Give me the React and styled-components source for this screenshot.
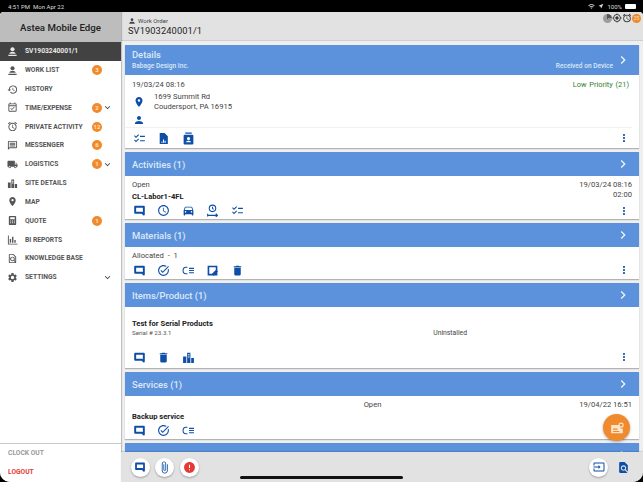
import React from "react";
import styled, { createGlobalStyle } from "styled-components";
import {
  MdPerson, MdHistory, MdOutlineEventAvailable, MdOutlineAlarm, MdOutlineMessage, MdLocalShipping,
  MdLocationOn, MdOutlineFindInPage, MdSettings, MdExpandMore,
  MdChevronRight, MdMoreVert, MdOutlineChecklist, MdFindInPage,
  MdAccessTime, MdDirectionsCar, MdOutlineTaskAlt, MdDelete, MdAttachFile, MdError,
  MdOutlineInput, MdWifi, MdNearMe, MdOutlineGpsFixed,
} from "react-icons/md";

const GlobalStyle = createGlobalStyle`
  html, body { margin: 0; padding: 0; background: #000; }
  body { font-family: Roboto, "Liberation Sans", sans-serif; }
`;

const Screen = styled.div`
  position: relative;
  width: 643px;
  height: 482px;
  overflow: hidden;
  background: #000;
  display: flex;
  flex-direction: column;
`;

const StatusBar = styled.div`
  height: 12px;
  flex: none;
  display: flex;
  align-items: center;
  justify-content: space-between;
  padding: 0 7px 0 8px;
  color: #ddd;
  font-size: 6px;
`;

const StatusGroup = styled.div`
  display: flex;
  align-items: center;
  gap: 3px;
`;

const Battery = styled.span`
  width: 11px;
  height: 5px;
  background: #fff;
  border-radius: 1px;
`;

const Body = styled.div`
  flex: 1;
  min-height: 0;
  display: flex;
  border-radius: 4px 4px 10px 10px;
  overflow: hidden;
  background: #efefef;
`;

const Sidebar = styled.nav`
  width: 121px;
  flex: none;
  background: #fff;
  display: flex;
  flex-direction: column;
  box-shadow: 1px 0 1px rgba(0, 0, 0, 0.2);
  z-index: 1;
`;

const Brand = styled.div`
  height: 30px;
  flex: none;
  display: flex;
  align-items: center;
  justify-content: center;
  background: #bdbdbd;
  color: #222;
  font-size: 9.7px;
  font-weight: 500;
`;

const NavRow = styled.div`
  height: 18.82px;
  flex: none;
  display: flex;
  align-items: center;
  padding-left: 7px;
  background: ${(p) => (p.$active ? "#424242" : "transparent")};
  color: ${(p) => (p.$active ? "#e8e8e8" : "#555")};
  font-size: 6.7px;
  font-weight: 700;
  svg { flex: none; }
`;

const NavLabel = styled.span`
  margin-left: 7px;
  width: 67px;
  white-space: nowrap;
`;

const NavBadge = styled.span`
  width: 10px;
  height: 10px;
  flex: none;
  border-radius: 50%;
  background: #f08a2c;
  color: #fde3c8;
  font-size: 6px;
  line-height: 10px;
  text-align: center;
`;

const NavCaret = styled.span`
  position: absolute;
  left: 102px;
  display: flex;
  color: #444;
`;

const SideBottom = styled.div`
  margin-top: auto;
  border-top: 1px solid #c9c9c9;
  padding: 0 0 1px 8px;
  font-size: 6.7px;
  font-weight: 700;
`;

const SideAction = styled.div`
  height: 18.5px;
  display: flex;
  align-items: center;
  color: ${(p) => p.$color};
`;

const Main = styled.main`
  position: relative;
  flex: 1;
  min-width: 0;
  display: flex;
  flex-direction: column;
`;

const TopBar = styled.header`
  height: 29px;
  flex: none;
  box-sizing: border-box;
  padding: 4px 0 0 7px;
  background: #e2e2e2;
  border-bottom: 1px solid #cfcfcf;
  position: relative;
`;

const OrderLabel = styled.div`
  display: flex;
  align-items: center;
  gap: 2px;
  font-size: 6px;
  color: #444;
  height: 9px;
`;

const OrderNumber = styled.div`
  font-size: 9.3px;
  line-height: 12px;
  letter-spacing: 0.1px;
  color: #222;
`;

const TopIcons = styled.div`
  position: absolute;
  top: 1px;
  right: 2px;
  display: flex;
  align-items: center;
  color: #333;
`;

const Dial = styled.span`
  width: 9px;
  height: 9px;
  border-radius: 50%;
  background: conic-gradient(#555 0 25%, #9c9c9c 25%);
`;

const TopBadge = styled(NavBadge)`
  width: 9px;
  height: 9px;
  line-height: 9px;
  font-size: 5px;
`;

const List = styled.div`
  flex: 1;
  min-height: 0;
  overflow: hidden;
  padding: 4px 4px 0;
  display: flex;
  flex-direction: column;
  gap: 4px;
`;

const Card = styled.section`
  flex: none;
  background: #fff;
  box-shadow: 0 1px 1px rgba(0, 0, 0, 0.25);
`;

const CardHead = styled.div`
  height: ${(p) => (p.$tall ? 30 : 24)}px;
  box-sizing: border-box;
  padding: 0 11px 0 7px;
  background: #5b92db;
  color: #dbe8f8;
  display: flex;
  align-items: center;
  justify-content: space-between;
  font-size: 9.4px;
  font-weight: 500;
`;

const HeadText = styled.div`
  flex: 1;
`;

const HeadSub = styled.div`
  display: flex;
  justify-content: space-between;
  font-size: 6.6px;
  line-height: 9px;
  margin-top: 2px;
  padding-right: 2px;
`;

const Chevron = styled(MdChevronRight)`
  color: #eef4fc;
  margin-right: -3px;
`;

const CardBody = styled.div`
  padding: ${(p) => p.$pad || "4px 7px 0"};
  height: ${(p) => p.$height}px;
  box-sizing: border-box;
  display: flex;
  flex-direction: column;
  color: #444;
  font-size: 7.6px;
`;

const Spread = styled.div`
  display: flex;
  justify-content: space-between;
  align-items: ${(p) => p.$align || "center"};
  line-height: ${(p) => p.$line || 11}px;
`;

const Priority = styled.span`
  color: #2e7d32;
  padding-right: 3px;
  font-size: 7.4px;
  word-spacing: 1px;
`;

const Strong = styled.div`
  color: #222;
  font-weight: 700;
  font-size: 7.6px;
  line-height: 11px;
`;

const Small = styled.div`
  color: #555;
  font-size: 6.2px;
  line-height: 8px;
`;

const OpenText = styled.div`
  line-height: 10px;
  margin-bottom: 1px;
`;

const RightText = styled.div`
  line-height: 9.5px;
  text-align: right;
`;

const AllocatedText = styled.div`
  line-height: 10px;
`;

const UninstalledLabel = styled.span`
  margin-right: 165px;
  color: #444;
  font-size: 6.8px;
`;

const ServiceRow = styled.div`
  display: grid;
  grid-template-columns: 1fr auto 1fr;
  justify-items: end;
  line-height: 10px;
  margin-bottom: 1px;
  span:nth-child(2) { margin-right: 19px; }
`;

const AddressRow = styled.div`
  display: flex;
  align-items: center;
  color: #444;
  font-size: 7.6px;
  line-height: 9.5px;
  margin-top: ${(p) => p.$top || 0}px;
`;

const IconCell = styled.span`
  width: 14px;
  padding-left: 1px;
  display: flex;
  color: #0d4fa6;
  margin-right: ${(p) => p.$gap || 0}px;
`;

const Actions = styled.div`
  display: flex;
  align-items: center;
  margin-top: auto;
  height: ${(p) => (p.$line ? 20 : 18)}px;
  color: #0d4fa6;
  border-top: ${(p) => (p.$line ? "1px solid #f1f1f1" : "none")};
  margin-left: ${(p) => (p.$line ? "-7px" : 0)};
  margin-bottom: ${(p) => p.$bottom || 0}px;
  padding-left: ${(p) => (p.$line ? "8px" : "1px")};
`;

const ActionIcon = styled.span`
  width: 24.4px;
  display: flex;
`;

const More = styled(MdMoreVert)`
  margin-left: auto;
  margin-right: 2px;
`;

const Footer = styled.footer`
  height: 30px;
  flex: none;
  background: #e2e2e2;
  box-shadow: 0 -1px 1px rgba(0, 0, 0, 0.12);
  display: flex;
  align-items: center;
  padding: 0 13px 0 9.500px;
  gap: 5.5px;
  z-index: 2;
`;

const RoundButton = styled.span`
  width: 19px;
  height: 19px;
  flex: none;
  border-radius: 50%;
  background: #fff;
  display: flex;
  align-items: center;
  justify-content: center;
  color: ${(p) => p.$color || "#0d4fa6"};
  box-shadow: 0 1px 2px rgba(0, 0, 0, 0.3);
`;

const PlainButton = styled.span`
  margin-left: 3.5px;
  display: flex;
  color: #0d4fa6;
`;

const Spacer = styled.div`
  flex: 1;
`;

const Fab = styled.button`
  position: absolute;
  right: 13px;
  bottom: 41px;
  width: 27px;
  height: 27px;
  border: 0;
  padding: 0;
  border-radius: 50%;
  background: #f08a2c;
  color: #fde6cf;
  display: flex;
  align-items: center;
  justify-content: center;
  box-shadow: 0 1px 3px rgba(0, 0, 0, 0.3);
  z-index: 3;
`;

const HomeBar = styled.div`
  position: absolute;
  left: 119px;
  bottom: 3.5px;
  width: 163px;
  height: 2.5px;
  border-radius: 2px;
  background: #111;
  z-index: 3;
`;

// these glyphs from the app have no close match in the icon packs
const Glyph = ({ size = 13, children, ...rest }) => (
  <svg width={size} height={size} viewBox="0 0 24 24" {...rest}>
    {children}
  </svg>
);

const ChatBox = ({ size }) => (
  <Glyph size={size} fill="none" stroke="currentColor" strokeWidth="3.6">
    <path d="M4 5h16v14.500l-3.500-3.500H4z" strokeLinejoin="round" />
  </Glyph>
);

const CheckLines = ({ size }) => (
  <Glyph size={size} fill="none" stroke="currentColor" strokeWidth="2">
    <path d="M10 6 L7 6 C3 6 2 9 2 12 C2 15 3 18 7 18 L10 18" />
    <path d="M13 8h9M13 12h9M13 16h9" />
  </Glyph>
);

const PersonBase = ({ size }) => (
  <Glyph size={size} fill="currentColor">
    <circle cx="12" cy="7" r="4.500" />
    <path d="M5 17c0-3 4-4.500 7-4.500s7 1.500 7 4.500zM3 19h18v3H3z" />
  </Glyph>
);

const PersonRoute = ({ size }) => (
  <Glyph size={size} fill="none" stroke="currentColor" strokeWidth="2">
    <circle cx="12" cy="8" r="6" />
    <path d="M12 5v3l2 2M3 18v5M3 21h18" />
    <path d="M18 18l3 3-3 3" />
  </Glyph>
);

const Buildings = ({ size }) => (
  <Glyph size={size} fill="currentColor">
    <path d="M2 10h6v12H2zM9.500 3h6v19h-6zM17 13h5v9h-5z" />
    <path d="M11 6h3v2h-3zM11 10h3v2h-3z" fill="#fff" />
  </Glyph>
);

const Calculator = ({ size }) => (
  <Glyph size={size} fill="currentColor">
    <path fillRule="evenodd" d="M6 2h12a2 2 0 0 1 2 2v16a2 2 0 0 1-2 2H6a2 2 0 0 1-2-2V4a2 2 0 0 1 2-2zm1 3v4h10V5zm0 7v2h2v-2zm4 0v2h2v-2zm4 0v2h2v-2zm-8 4v2h2v-2zm4 0v2h2v-2zm4 0v2h2v-2z" />
  </Glyph>
);

const AxisBars = ({ size }) => (
  <Glyph size={size} fill="currentColor">
    <path d="M2 3h2v18h19v2H2zM6 11h3v8H6zM11 6h3v13h-3zM16 13h3v6h-3z" />
  </Glyph>
);

const DocChart = ({ size }) => (
  <Glyph size={size} fill="currentColor">
    <path fillRule="evenodd" d="M5 2h9l6 6v14H5zm3 16v2h2v-2zm3-4v6h2v-6zm3 2v4h2v-4z" />
  </Glyph>
);

const ContactCard = ({ size }) => (
  <Glyph size={size} fill="currentColor">
    <path d="M6 1h12v2H6z" />
    <path fillRule="evenodd" d="M5 5h14a2 2 0 0 1 2 2v14a2 2 0 0 1-2 2H5a2 2 0 0 1-2-2V7a2 2 0 0 1 2-2zm7 4a3 3 0 1 0 0 6 3 3 0 0 0 0-6zm-5 10h10c0-2-3-3-5-3s-5 1-5 3z" />
  </Glyph>
);

const NoteEdit = ({ size }) => (
  <Glyph size={size} fill="currentColor">
    <path fillRule="evenodd" d="M3 3h18v18H3zm3 3v12h5l7-7V6z" />
    <path d="M13 19l7-7 2 2-7 7h-2z" />
  </Glyph>
);

const CardAdd = ({ size }) => (
  <Glyph size={size} fill="currentColor">
    <path fillRule="evenodd" d="M2 7h14v3a5 5 0 0 0 6 3v8H2zm3 6v2h8v-2zm0 4v2h11v-2z" />
    <circle cx="19" cy="7" r="3.500" fill="none" stroke="currentColor" strokeWidth="2" />
  </Glyph>
);

const navItems = [
  { label: "SV1903240001/1", icon: PersonBase, active: true },
  { label: "WORK LIST", icon: PersonBase, badge: "3" },
  { label: "HISTORY", icon: MdHistory },
  { label: "TIME/EXPENSE", icon: MdOutlineEventAvailable, badge: "2", caret: true },
  { label: "PRIVATE ACTIVITY", icon: MdOutlineAlarm, badge: "12" },
  { label: "MESSENGER", icon: MdOutlineMessage, badge: "6" },
  { label: "LOGISTICS", icon: MdLocalShipping, badge: "1", caret: true },
  { label: "SITE DETAILS", icon: Buildings },
  { label: "MAP", icon: MdLocationOn },
  { label: "QUOTE", icon: Calculator, badge: "1" },
  { label: "BI REPORTS", icon: AxisBars },
  { label: "KNOWLEDGE BASE", icon: MdOutlineFindInPage },
  { label: "SETTINGS", icon: MdSettings, caret: true },
];

const Head = ({ title, sub, status }) => (
  <CardHead $tall={!!sub}>
    <HeadText>
      {title}
      {sub && (
        <HeadSub>
          <span>{sub}</span>
          <span>{status}</span>
        </HeadSub>
      )}
    </HeadText>
    <Chevron size={16} />
  </CardHead>
);

const ActionBar = ({ icons, line, bottom, more = true }) => (
  <Actions $line={line} $bottom={bottom}>
    {icons.map((Icon, i) => (
      <ActionIcon key={i}>
        <Icon size={13} />
      </ActionIcon>
    ))}
    {more && <More size={12} />}
  </Actions>
);

export default function App() {
  return (
    <Screen>
      <GlobalStyle />
      <StatusBar>
        <span>4:51 PM&nbsp;&nbsp;Mon Apr 22</span>
        <StatusGroup>
          <MdWifi size={7} />
          <MdNearMe size={6} />
          <span>100%</span>
          <Battery />
        </StatusGroup>
      </StatusBar>
      <Body>
        <Sidebar>
          <Brand>Astea Mobile Edge</Brand>
          {navItems.map(({ label, icon: Icon, badge, caret, active }) => (
            <NavRow key={label} $active={active}>
              <Icon size={11} />
              <NavLabel>{label}</NavLabel>
              {badge && <NavBadge>{badge}</NavBadge>}
              {caret && (
                <NavCaret>
                  <MdExpandMore size={11} />
                </NavCaret>
              )}
            </NavRow>
          ))}
          <SideBottom>
            <SideAction $color="#9a9a9a">CLOCK OUT</SideAction>
            <SideAction $color="#e53935">LOGOUT</SideAction>
          </SideBottom>
        </Sidebar>
        <Main>
          <TopBar>
            <OrderLabel>
              <MdPerson size={8} />
              Work Order
            </OrderLabel>
            <OrderNumber>SV1903240001/1</OrderNumber>
            <TopIcons>
              <Dial />
              <MdOutlineGpsFixed size={10} />
              <MdOutlineAlarm size={10} />
              <TopBadge>25</TopBadge>
            </TopIcons>
          </TopBar>
          <List>
            <Card>
              <Head title="Details" sub="Babage Design Inc." status="Received on Device" />
              <CardBody $height={73}>
                <Spread>
                  <span>19/03/24 08:16</span>
                  <Priority>Low Priority (21)</Priority>
                </Spread>
                <AddressRow $top={2}>
                  <IconCell $gap={7}>
                    <MdLocationOn size={12} />
                  </IconCell>
                  <div>
                    1699 Summit Rd
                    <br />
                    Coudersport, PA 16915
                  </div>
                </AddressRow>
                <AddressRow $top={3}>
                  <IconCell>
                    <MdPerson size={12} />
                  </IconCell>
                </AddressRow>
                <ActionBar icons={[MdOutlineChecklist, DocChart, ContactCard]} line />
              </CardBody>
            </Card>
            <Card>
              <Head title="Activities (1)" />
              <CardBody $height={43}>
                <Spread $align="flex-start" $line={10}>
                  <div>
                    <OpenText>Open</OpenText>
                    <Strong>CL-Labor1-4FL</Strong>
                  </div>
                  <RightText>
                    19/03/24 08:16
                    <br />
                    02:00
                  </RightText>
                </Spread>
                <ActionBar icons={[ChatBox, MdAccessTime, MdDirectionsCar, PersonRoute, MdOutlineChecklist]} />
              </CardBody>
            </Card>
            <Card>
              <Head title="Materials (1)" />
              <CardBody $height={32}>
                <AllocatedText>Allocated&nbsp;&nbsp;-&nbsp;&nbsp;1</AllocatedText>
                <ActionBar icons={[ChatBox, MdOutlineTaskAlt, CheckLines, NoteEdit, MdDelete]} />
              </CardBody>
            </Card>
            <Card>
              <Head title="Items/Product (1)" />
              <CardBody $height={61} $pad="11px 7px 0">
                <Strong>Test for Serial Products</Strong>
                <Spread $line={8}>
                  <Small>Serial # 23.3.1</Small>
                  <UninstalledLabel>Uninstalled</UninstalledLabel>
                </Spread>
                <ActionBar icons={[ChatBox, MdDelete, Buildings]} bottom={2} />
              </CardBody>
            </Card>
            <Card>
              <Head title="Services (1)" />
              <CardBody $height={43}>
                <ServiceRow>
                  <span />
                  <span>Open</span>
                  <span>19/04/22 16:51</span>
                </ServiceRow>
                <Strong>Backup service</Strong>
                <ActionBar icons={[ChatBox, MdOutlineTaskAlt, CheckLines]} more={false} />
              </CardBody>
            </Card>
            <Card>
              <Head title="" />
            </Card>
          </List>
          <Fab>
            <CardAdd size={14} />
          </Fab>
          <Footer>
            <RoundButton>
              <ChatBox size={12} />
            </RoundButton>
            <RoundButton>
              <MdAttachFile size={13} />
            </RoundButton>
            <RoundButton $color="#e53935">
              <MdError size={13} />
            </RoundButton>
            <Spacer />
            <RoundButton>
              <MdOutlineInput size={12} />
            </RoundButton>
            <PlainButton>
              <MdFindInPage size={13} />
            </PlainButton>
          </Footer>
          <HomeBar />
        </Main>
      </Body>
    </Screen>
  );
}
